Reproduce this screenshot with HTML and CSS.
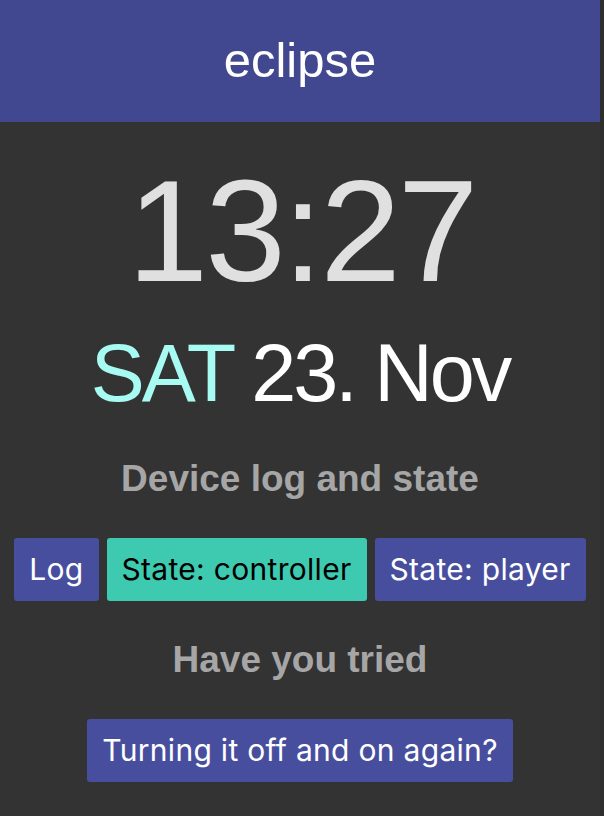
FILE: index.html
```html
<!DOCTYPE html>
<html lang="en">
<head>
<meta charset="utf-8">
<title>eclipse</title>
<link rel="stylesheet" href="styles.css">
</head>
<body>
<div class="app">
  <header class="topbar">eclipse</header>
  <main class="content">
    <div class="clock">13:27</div>
    <div class="date"><span class="day">SAT</span> 23. Nov</div>
    <h2 class="heading">Device log and state</h2>
    <div class="btn-row">
      <button class="btn">Log</button>
      <button class="btn btn-active">State: controller</button>
      <button class="btn">State: player</button>
    </div>
    <h2 class="heading heading-second">Have you tried</h2>
    <div class="btn-row">
      <button class="btn">Turning it off and on again?</button>
    </div>
  </main>
</div>
</body>
</html>
```

FILE: styles.css
```css
html, body {
  margin: 0;
  padding: 0;
  background: #2e2e2e;
  height: 100%;
  overflow: hidden;
}

.app {
  width: 600px;
  min-height: 816px;
  background: #333333;
  font-family: "Liberation Sans", Arial, sans-serif;
}

.topbar {
  height: 122px;
  background: #42488f;
  color: #ffffff;
  font-size: 49px;
  display: flex;
  align-items: center;
  justify-content: center;
  padding-bottom: 2px;
  box-sizing: border-box;
}

.content {
  display: flex;
  flex-direction: column;
  align-items: center;
  text-align: center;
}

.clock {
  margin-top: 37px;
  font-size: 145px;
  line-height: 1;
  letter-spacing: -3px;
  color: #e0e0e0;
  padding-left: 3px;
}

.date {
  margin-top: 29px;
  font-size: 81px;
  line-height: 1;
  letter-spacing: -3px;
  color: #ffffff;
}

.day {
  color: #a8fbf3;
}

.heading {
  margin: 46px 0 0;
  font-size: 37px;
  line-height: 1;
  font-weight: bold;
  color: #a6a6a6;
}

.heading-second {
  margin-top: 40px;
}

.btn-row {
  display: flex;
  flex-wrap: wrap;
  justify-content: center;
  gap: 8px;
  margin-top: 41px;
}

.btn {
  font-family: Inter, "Noto Sans", sans-serif;
  font-size: 30px;
  line-height: 35px;
  letter-spacing: 0.3px;
  padding: 14px 15px;
  border: none;
  border-radius: 3px;
  background: #484e9e;
  color: #ffffff;
  margin: 0;
}

.btn-active {
  background: #3ecab0;
  color: #000000;
}
```
